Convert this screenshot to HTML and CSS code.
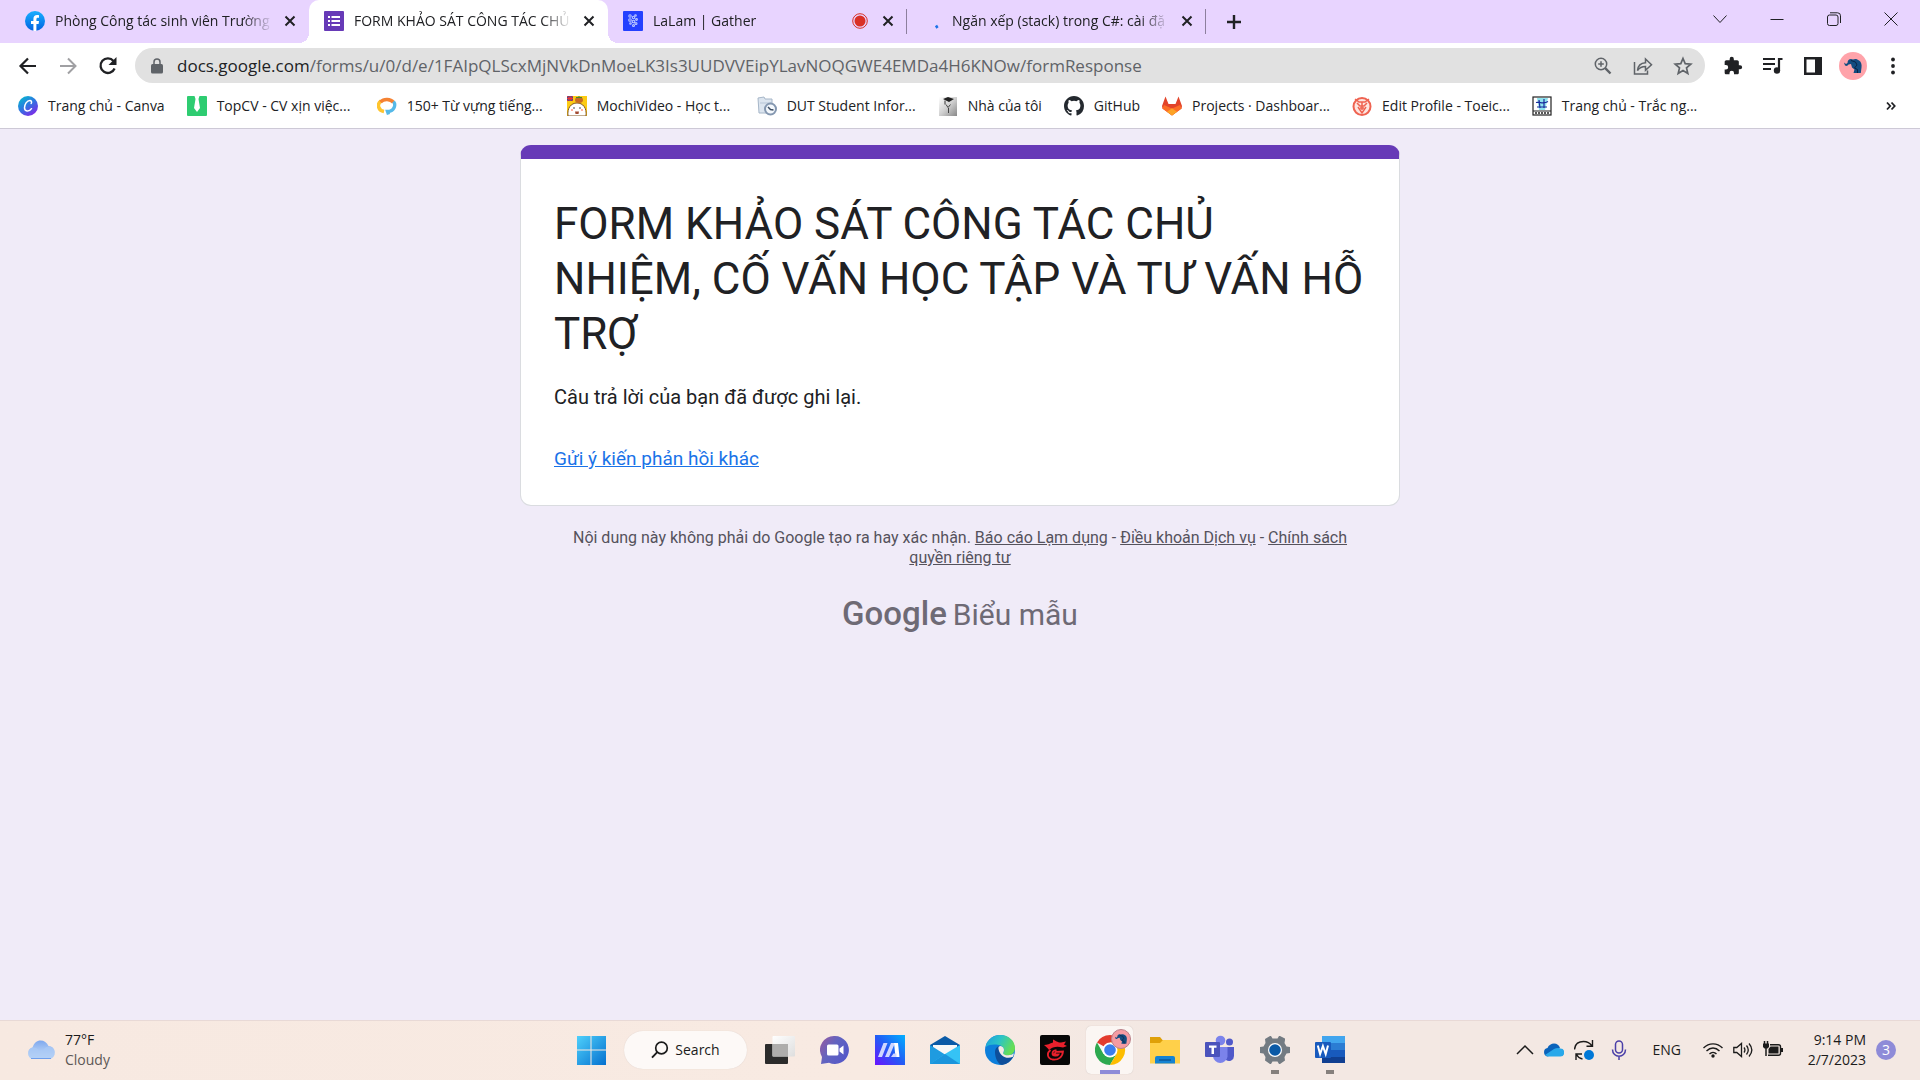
FILE: index.html
```html
<!DOCTYPE html>
<html lang="vi">
<head>
<meta charset="utf-8">
<meta name="viewport" content="width=device-width, initial-scale=1">
<title>FORM KHẢO SÁT CÔNG TÁC CHỦ NHIỆM</title>
<link rel="stylesheet" href="styles.css">
</head>
<body>
<header class="browser">
  <div class="tab-strip">
    <div class="tabs">
      <div class="tab">
        <svg class="icon-20" viewBox="0 0 20 20"><defs><linearGradient id="fb" x1="0" y1="0" x2="0" y2="1"><stop offset="0" stop-color="#19afff"/><stop offset="1" stop-color="#0062e0"/></linearGradient></defs><circle cx="10" cy="10" r="10" fill="url(#fb)"/><path d="M8.4 20v-7H6v-3h2.4V8c0-2.500 1.400-3.900 3.700-3.900.9 0 1.900.2 1.900.2v2.500h-1.100c-1.200 0-1.500.7-1.500 1.500V10h2.600l-.4 3h-2.200v7z" fill="#fff"/></svg>
        <span class="tab-title">Phòng Công tác sinh viên Trường</span>
        <button class="tab-close" aria-label="Close tab"><svg viewBox="0 0 12 12"><path d="M1.500 1.500l9 9M10.500 1.500l-9 9"/></svg></button>
      </div>
      <div class="tab tab-active">
        <svg class="icon-20" viewBox="0 0 20 20"><rect width="20" height="20" rx="1" fill="#673ab7"/><path d="M4 5h2v2H4zM7.500 5H16v2H7.500zM4 9h2v2H4zM7.500 9H16v2H7.500zM4 13h2v2H4zM7.500 13H16v2H7.500z" fill="#fff"/></svg>
        <span class="tab-title">FORM KHẢO SÁT CÔNG TÁC CHỦ</span>
        <button class="tab-close" aria-label="Close tab"><svg viewBox="0 0 12 12"><path d="M1.500 1.500l9 9M10.500 1.500l-9 9"/></svg></button>
      </div>
      <div class="tab tab-divided">
        <svg class="icon-20" viewBox="0 0 20 20"><rect width="20" height="20" rx="1" fill="#2440ff"/><g fill="none" stroke="#b9c6ff" stroke-width="1.100"><circle cx="7" cy="5" r="1.200"/><circle cx="10.500" cy="6.500" r="1.200"/><circle cx="7" cy="9" r="1.300"/><circle cx="12.500" cy="4.500" r=".8"/><circle cx="10.500" cy="10.500" r="1.300"/><circle cx="13.500" cy="8.500" r=".9"/><circle cx="13" cy="12.500" r="1"/><circle cx="10.500" cy="14.500" r="1"/><circle cx="7.500" cy="12.500" r=".8"/></g></svg>
        <span class="tab-title">LaLam | Gather</span>
        <svg class="icon-16 recording" viewBox="0 0 16 16"><circle cx="8" cy="8" r="7.300" fill="none" stroke="#d93025"/><circle cx="8" cy="8" r="5.500" fill="#d93025"/></svg>
        <button class="tab-close" aria-label="Close tab"><svg viewBox="0 0 12 12"><path d="M1.500 1.500l9 9M10.500 1.500l-9 9"/></svg></button>
      </div>
      <div class="tab tab-divided">
        <svg class="icon-20" viewBox="0 0 20 20"><path d="M14 14.500l1.500 2.500" stroke="#1a73e8" stroke-width="2.500"/></svg>
        <span class="tab-title">Ngăn xếp (stack) trong C#: cài đặ</span>
        <button class="tab-close" aria-label="Close tab"><svg viewBox="0 0 12 12"><path d="M1.500 1.500l9 9M10.500 1.500l-9 9"/></svg></button>
      </div>
    </div>
    <button class="new-tab" aria-label="New tab"><svg class="icon-16" viewBox="0 0 16 16"><path d="M8 1v14M1 8h14" stroke="#202124" stroke-width="2.400"/></svg></button>
    <div class="window-controls">
      <button aria-label="Search tabs"><svg class="icon-16" viewBox="0 0 16 16"><path d="M1.500 4.500L8 11.500l6.500-7"/></svg></button>
      <button aria-label="Minimize"><svg class="icon-16" viewBox="0 0 16 16"><path d="M1.500 8.500h13"/></svg></button>
      <button aria-label="Restore"><svg class="icon-16" viewBox="0 0 16 16"><rect x="1.500" y="4" width="10.500" height="10.500" rx="2"/><path d="M4 1.800h7.500a3 3 0 0 1 3 3V12"/></svg></button>
      <button aria-label="Close"><svg class="icon-16" viewBox="0 0 16 16"><path d="M1.500 1.500l13 13M14.500 1.500l-13 13"/></svg></button>
    </div>
  </div>

  <div class="toolbar">
    <div class="nav">
      <button aria-label="Back"><svg class="icon-20" viewBox="0 0 20 20"><path d="M18 10H3M10 2.500L2.500 10l7.500 7.500" fill="none" stroke="#202124" stroke-width="2.200"/></svg></button>
      <button aria-label="Forward"><svg class="icon-20" viewBox="0 0 20 20"><path d="M2 10h15M10 2.500l7.500 7.500-7.500 7.500" fill="none" stroke="#a0a0a3" stroke-width="2"/></svg></button>
      <button aria-label="Reload"><svg class="icon-20" viewBox="0 0 20 20"><path d="M16.600 12.500A7.300 7.300 0 1 1 15.500 5" fill="none" stroke="#202124" stroke-width="2.300"/><path d="M18.500 1v8h-8z" fill="#202124"/></svg></button>
    </div>
    <div class="omnibox">
      <svg class="lock" viewBox="0 0 12 16"><rect x="0" y="6" width="12" height="9.500" rx="1.500" fill="#5f6368"/><path d="M3 6.500V4a3 3 0 0 1 6 0v2.500" fill="none" stroke="#5f6368" stroke-width="1.500"/></svg>
      <label class="url-host" for="url">docs.google.com</label>
      <input class="url-path" id="url" type="text" value="/forms/u/0/d/e/1FAIpQLScxMjNVkDnMoeLK3Is3UUDVVEipYLavNOQGWE4EMDa4H6KNOw/formResponse">
      <div class="omnibox-actions">
        <button aria-label="Zoom"><svg class="icon-20" viewBox="0 0 20 20"><circle cx="8" cy="8" r="5.700"/><path d="M12.200 12.200l5.300 5.300" stroke-width="2.400"/><path d="M8 5.200v5.600M5.200 8h5.600"/></svg></button>
        <button aria-label="Share"><svg class="icon-20" viewBox="0 0 20 20"><path d="M1.500 6v12h13v-3.500M4.500 14.500c.5-5 3.500-7.500 8-7.700V3l6 5.700-6 5.500V10.500c-3.500 0-6 1-8 4z"/></svg></button>
        <button aria-label="Bookmark"><svg class="icon-20" viewBox="0 0 20 20"><path d="M10 2.500l2.200 5.200 5.600.5-4.300 3.700 1.300 5.500-4.800-2.900-4.800 2.900 1.300-5.500-4.300-3.700 5.600-.5z" stroke-width="1.700"/></svg></button>
      </div>
    </div>
    <div class="toolbar-actions">
      <button aria-label="Extensions"><svg class="icon-20" viewBox="0 0 24 24"><path d="M20.500 11H19V7c0-1.100-.9-2-2-2h-4V3.500a2.500 2.500 0 0 0-5 0V5H4c-1.100 0-2 .9-2 2v3.800h1.500a2.700 2.700 0 0 1 0 5.400H2V20c0 1.100.9 2 2 2h3.800v-1.500a2.700 2.700 0 0 1 5.400 0V22H17c1.100 0 2-.9 2-2v-4h1.500a2.500 2.500 0 0 0 0-5z" fill="#202124"/></svg></button>
      <button aria-label="Media"><svg class="icon-20" viewBox="0 0 20 20"><path d="M0 3h12M0 8h12M0 13h8M19.500 3H16v11" fill="none" stroke="#202124" stroke-width="2.200"/><circle cx="14" cy="14.500" r="3.200" fill="#202124"/></svg></button>
      <button aria-label="Side panel"><svg class="icon-20" viewBox="0 0 20 20"><path d="M1 1h18v18H1zM3.500 3.500v13H12v-13z" fill="#202124" fill-rule="evenodd"/></svg></button>
      <button aria-label="Profile"><svg class="icon-28" viewBox="0 0 28 28"><defs><g id="elephant"><path d="M5 10.500l2 1.500 1.500-1C8.500 8.500 10 7 12 7l2 .5c2-1 4.500-.5 6 1 2 1 3 4 2.500 7l-.7 5.500H14.500l1-3.500-2.500-2-1-3.500-2.500.5L8 14l-2-.5z" fill="#124c80"/><path d="M12 8.500l4.500 1.500 1.500 3-2.500 3M15.500 16l3 1.500v3.500" fill="none" stroke="#0a2446"/></g></defs><circle cx="14" cy="14" r="14" fill="#ffa3aa"/><use href="#elephant"/></svg></button>
      <button aria-label="Menu"><svg class="icon-20" viewBox="0 0 20 20"><g fill="#202124"><circle cx="10" cy="3.500" r="1.900"/><circle cx="10" cy="10" r="1.900"/><circle cx="10" cy="16.500" r="1.900"/></g></svg></button>
    </div>
  </div>

  <nav class="bookmarks">
    <a href="#"><svg class="icon-20" viewBox="0 0 20 20"><defs><linearGradient id="cv" x1="0" y1="0" x2=".7" y2="1"><stop offset="0" stop-color="#00c4cc"/><stop offset=".5" stop-color="#2a7be0"/><stop offset="1" stop-color="#7d2ae8"/></linearGradient></defs><circle cx="10" cy="10" r="10" fill="url(#cv)"/><path d="M13.200 7.500c.8-1.500.3-3-1.300-3-3 0-5.400 4-5.400 7.300 0 3.800 4.500 4.600 7 .9" fill="none" stroke="#fff" stroke-width="1.500" stroke-linecap="round"/></svg><span>Trang chủ - Canva</span></a>
    <a href="#" class="bookmark-long"><svg class="icon-20" viewBox="0 0 20 20"><rect width="20" height="20" rx="1" fill="#2ecc71"/><path d="M7.500 0h5l-1 3 1.500 9-3 4-3-4 1.500-9z" fill="#fff"/></svg><span>TopCV - CV xịn việc...</span></a>
    <a href="#" class="bookmark-long"><svg class="icon-20" viewBox="0 0 20 20"><path d="M7 15.500A7 6 0 0 1 4 5" fill="none" stroke="#ffc52e" stroke-width="3.500"/><path d="M3.500 6A8 6.500 0 0 1 16.500 6.500" fill="none" stroke="#f58232" stroke-width="3.500"/><path d="M16.500 5.500c2.500 3 1 8-3 9.500-1.500.6-3 .5-3 .5l1 3" fill="none" stroke="#55b9e8" stroke-width="3.300"/></svg><span>150+ Từ vựng tiếng...</span></a>
    <a href="#" class="bookmark-long"><svg class="icon-20" viewBox="0 0 20 20"><rect width="20" height="20" fill="#fccb14"/><path d="M0 0h6v5H0z" fill="#35509b"/><path d="M0 0l6 5M6 0L0 5M3 0v5M0 2.500h6" stroke="#e33"/><path d="M1 20c-1-8 3-13 9-13s10 5 9 13z" fill="#fff" stroke="#825620"/><ellipse cx="12" cy="4" rx="4" ry="3" fill="#c96a22"/><path d="M12 2V0M9 1.500h6" stroke="#46862f"/><circle cx="7" cy="12" r=".8" fill="#333"/><circle cx="13" cy="12" r=".8" fill="#333"/><path d="M8 15.500h4l-.5 2.500h-3z" fill="#a24b32"/><path d="M4 14h2M14 14h2" stroke="#ffad9e" stroke-width="2"/></svg><span>MochiVideo - Học t...</span></a>
    <a href="#"><svg class="icon-20" viewBox="0 0 20 20"><path d="M1 2l6-1 1 2h7v14H2z" fill="#dce5ef" stroke="#a6b6c8"/><path d="M3 7h12" stroke="#b7c5d6"/><circle cx="13.500" cy="13" r="5.500" fill="#f4f8fc" stroke="#8497b0" stroke-width="2"/><path d="M11 11l2.500 2.500 3 .5" stroke="#3d4e63" fill="none" stroke-width="1.500"/></svg><span>DUT Student Infor...</span></a>
    <a href="#"><svg class="icon-20" viewBox="0 0 20 20"><defs><linearGradient id="nh" x1="0" y1="0" x2="1" y2="1"><stop offset="0" stop-color="#fff"/><stop offset=".5" stop-color="#d0d0d0"/><stop offset="1" stop-color="#888"/></linearGradient></defs><path d="M1 1h18v19H1z" fill="url(#nh)"/><path d="M5 3l5-2 6 2-5 3z" fill="#222"/><path d="M7 4.500v4" stroke="#333"/><path d="M8 8.500l2 3 2.500-3M10.500 12v5" stroke="#444" fill="none"/></svg><span>Nhà của tôi</span></a>
    <a href="#"><svg class="icon-20" viewBox="0 0 16 16"><path d="M8 0C3.580 0 0 3.580 0 8c0 3.540 2.290 6.530 5.470 7.590.4.070.55-.17.55-.38 0-.19-.01-.82-.01-1.490-2.010.37-2.530-.49-2.690-.94-.09-.23-.48-.94-.82-1.130-.28-.15-.68-.52-.01-.53.63-.01 1.080.58 1.230.82.72 1.210 1.870.87 2.330.66.07-.52.28-.87.51-1.070-1.780-.2-3.640-.89-3.640-3.950 0-.87.31-1.590.82-2.150-.08-.2-.36-1.020.08-2.120 0 0 .67-.21 2.200.82a7.600 7.600 0 0 1 4 0c1.530-1.040 2.200-.82 2.200-.82.44 1.100.16 1.920.08 2.120.51.56.82 1.270.82 2.150 0 3.070-1.870 3.750-3.650 3.950.29.25.54.73.54 1.480 0 1.070-.01 1.930-.01 2.200 0 .21.15.46.55.38A8 8 0 0 0 16 8c0-4.420-3.580-8-8-8z" fill="#24292f"/></svg><span>GitHub</span></a>
    <a href="#" class="bookmark-long"><svg class="icon-20" viewBox="0 0 20 20"><path d="M10 19.500L.5 12.500 0 10 3.500.5 6.500 8h7l3-7.500L20 10l-.5 2.500z" fill="#e24329"/><path d="M10 19.500L.3 12.500 2 9l8 3.500L18 9l1.700 3.500z" fill="#fc6d26"/><path d="M10 19.500l-5-3.700 5-3.600 5 3.600z" fill="#fca326"/></svg><span>Projects · Dashboar...</span></a>
    <a href="#"><svg class="icon-20" viewBox="0 0 20 20"><circle cx="10" cy="10.500" r="8.500" fill="#fde5e0" stroke="#ef6351" stroke-width="2"/><path d="M3 3l4 3h6l4-3M5 7l3 3h4l3-3M6 11l4 6 4-6M8 12h4M10 6v8" fill="none" stroke="#ef6351" stroke-width="1.500"/></svg><span>Edit Profile - Toeic...</span></a>
    <a href="#" class="bookmark-long"><svg class="icon-20" viewBox="0 0 20 20"><rect x="1" y="1" width="18" height="18" fill="#fff" stroke="#222" stroke-width="1.200"/><path d="M5 2h11l-3 12H7z" fill="#8fe3ee"/><path d="M4 6.500c4-1 7 2 12-1M5 11h10M7 4l1 8M12 3v9" fill="none" stroke="#1b2a9c" stroke-width="1.200"/><path d="M1 15h18" stroke="#222"/><path d="M3 17h14" stroke="#222" stroke-width="1.500" stroke-dasharray="2 1"/></svg><span>Trang chủ - Trắc ng...</span></a>
    <button class="bookmarks-more" aria-label="More bookmarks"><svg class="icon-10" viewBox="0 0 10 10"><path d="M1 1.500L4.200 5 1 8.500M5.500 1.500L8.700 5 5.500 8.500" fill="none" stroke="#202124" stroke-width="1.800"/></svg></button>
  </nav>
</header>

<main class="page">
  <section class="card">
    <h1>FORM KHẢO SÁT CÔNG TÁC CHỦ NHIỆM, CỐ VẤN HỌC TẬP VÀ TƯ VẤN HỖ TRỢ</h1>
    <p>Câu trả lời của bạn đã được ghi lại.</p>
    <a href="#">Gửi ý kiến phản hồi khác</a>
  </section>
  <p class="legal">Nội dung này không phải do Google tạo ra hay xác nhận. <a href="#">Báo cáo Lạm dụng</a> - <a href="#">Điều khoản Dịch vụ</a> - <a href="#">Chính sách quyền riêng tư</a></p>
  <a class="brand" href="#"><span class="brand-name">Google</span><span class="brand-product">Biểu mẫu</span></a>
</main>

<footer class="taskbar">
  <button class="weather">
    <svg class="cloud" viewBox="0 0 30 20"><defs><linearGradient id="cl" x1="0" y1="0" x2="0" y2="1"><stop offset="0" stop-color="#7ea8ee"/><stop offset="1" stop-color="#cfe4fa"/></linearGradient></defs><path d="M6.500 19a6 6 0 0 1 0-11.500C8 3 11 .5 14.500.5S21 2.500 22.500 6a6.600 6.600 0 0 1 1 13z" fill="url(#cl)"/><path d="M17 11c1-4 6-6 9.500-3.500A6.600 6.600 0 0 1 23.500 19h-17A6 6 0 0 1 6 7.600c4-.6 7 1.500 7.500 4" fill="#a9c9f5" opacity=".7"/><path d="M5 18.500h20" stroke="#6f9fec"/></svg>
    <span class="weather-text"><span>77°F</span><span class="weather-sky">Cloudy</span></span>
  </button>

  <div class="apps">
    <button class="app" aria-label="Start"><svg class="icon-30" viewBox="0 0 30 30"><defs><linearGradient id="wn" x1="0" y1="0" x2="1" y2="1"><stop offset="0" stop-color="#4fd0fb"/><stop offset="1" stop-color="#0470cf"/></linearGradient></defs><path d="M1 1h13.500v13.500H1zM15.500 1H30v13.500H15.500zM1 15.500h13.500V30H1zM15.500 15.500H30V30H15.500z" fill="url(#wn)"/></svg></button>
    <button class="search"><svg class="icon-18" viewBox="0 0 18 18"><circle cx="10.500" cy="7" r="5.800" fill="none" stroke="#1b1b1b" stroke-width="1.700"/><path d="M6.300 11.200L1 16.700" stroke="#1b1b1b" stroke-width="1.900"/></svg><span>Search</span></button>
    <button class="app" aria-label="Task view"><svg class="icon-30" viewBox="0 0 30 30"><defs><linearGradient id="tv" x1="0" y1="0" x2="1" y2="1"><stop offset="0" stop-color="#fff"/><stop offset="1" stop-color="#dedede"/></linearGradient></defs><rect x="0" y="9" width="23" height="20" rx="1" fill="#2b2b2b"/><rect x="7.500" y="1" width="22.500" height="20.500" rx="1" fill="url(#tv)"/><rect x="7.500" y="9" width="15.500" height="12.500" fill="#aeadac"/></svg></button>
    <button class="app" aria-label="Chat"><svg class="icon-30" viewBox="0 0 30 30"><defs><linearGradient id="ch" x1="0" y1="0" x2="1" y2=".6"><stop offset="0" stop-color="#9b5a9f"/><stop offset=".5" stop-color="#6264c0"/><stop offset="1" stop-color="#5558c8"/></linearGradient></defs><path d="M15 1a14 14 0 1 1-6 26.700L1 29l1-7A14 14 0 0 1 15 1z" fill="url(#ch)"/><rect x="7" y="9.500" width="11.500" height="11" rx="1.500" fill="#fff"/><path d="M19.500 13.500l4-3v9l-4-3z" fill="#fff"/></svg></button>
    <button class="app" aria-label="MyASUS"><svg class="icon-30" viewBox="0 0 30 30"><defs><linearGradient id="ma" x1="0" y1="1" x2="1" y2="0"><stop offset="0" stop-color="#6a12ff"/><stop offset=".5" stop-color="#225cf5"/><stop offset="1" stop-color="#00b0ff"/></linearGradient></defs><rect width="30" height="30" fill="url(#ma)"/><path d="M3 22L8.500 8h4L7 22zM10 22l6-14h4l-6 14z" fill="#cfd6ff"/><path d="M19 8h4l1.500 14h-4z" fill="#fff"/><path d="M16 22l2.500-3.500h3V22z" fill="#cfd6ff"/></svg></button>
    <button class="app" aria-label="Mail"><svg class="icon-30" viewBox="0 0 30 30"><path d="M0 10L15 1l15 9v6H0z" fill="#0b5ba7"/><path d="M3 10h24v12H3z" fill="#f7f7f7"/><path d="M0 10l15 9.500V29H0z" fill="#1f9be0"/><path d="M30 10L15 19 0 29h30z" fill="#35c3f5"/><path d="M15 19l15 10H0z" fill="#1b95dc"/></svg></button>
    <button class="app" aria-label="Edge"><svg class="icon-30" viewBox="0 0 30 30"><defs><linearGradient id="e1" x1="0" y1="0" x2="1" y2=".4"><stop offset="0" stop-color="#1b9de0"/><stop offset=".5" stop-color="#2cc4c6"/><stop offset="1" stop-color="#65de55"/></linearGradient></defs><circle cx="15" cy="15" r="15" fill="#0d7fdb"/><path d="M1 10C3 4 9 0 15 0c9 0 15 6 15 13 0 5-4 7.500-7.500 7.500-4 0-5-1.500-4-3 1.500-2.500.5-6.500-4.500-7.500-5-1-10-.5-13 2z" fill="url(#e1)"/><path d="M10 17c0-4 3-6 5-6-2 3-1 7 2 9 3 2.500 7 2.500 11 1l.5 0A15 15 0 0 1 17 30c-4-1-7-7-7-13z" fill="#0e4f9b"/><path d="M13.500 14c-.5-2 .5-3 2-3 2.500.5 4.500 3 3 6-1 1.800.2 3 4 3.300 2.500.2 5-.8 6.500-2l-1 3.500c-6 2.800-13 0-14.500-7.800z" fill="#f4eae5"/></svg></button>
    <button class="app" aria-label="Garena"><svg class="icon-30" viewBox="0 0 30 30"><rect width="30" height="30" rx="2" fill="#070707"/><path d="M4 10c3 0 6-1.500 9-2.500L13 4.500c3 1 4 3 8 3l5-1-2 3 3 1.500-4 1.500c-6-1.500-10-1-14 2.500-1-2-3-3-5-5z" fill="#e8202c"/><path d="M10.500 15c-4 3-3.500 8 2 9.500 6 .8 10-2.500 10.500-8l-7 .3-2 2.500h4.500c-1 2-6 2-6-.8 0-1.500 1.500-3 4-3.300" fill="none" stroke="#e8202c" stroke-width="1.800"/></svg></button>
    <button class="app app-active" aria-label="Chrome"><svg class="icon-36" viewBox="0 0 36 36"><path d="M15 21L2 13.500A15 15 0 0 1 28 13.500H15z" fill="#e33b2e"/><path d="M15 21l6.500 4L15 36A15 15 0 0 1 2 13.500L8.500 25z" fill="#2da94f"/><path d="M15 13.500h13A15 15 0 0 1 15 36l6.500-11z" fill="#fdbd00"/><circle cx="15" cy="21" r="7.500" fill="#fff"/><circle cx="15" cy="21" r="5.800" fill="#3b7ded"/><circle cx="26" cy="10" r="9.500" fill="#f59ba2" stroke="#b98189"/><use href="#elephant" transform="translate(16.500 .5) scale(.68)"/></svg></button>
    <button class="app" aria-label="File Explorer"><svg class="icon-30" viewBox="0 0 30 30"><path d="M0 2h10l2.500 3H30v10H0z" fill="#dfa008"/><path d="M0 8h10l3-3h17v23.500H0z" fill="#ffd04a"/><path d="M5 28.500V23a2 2 0 0 1 2-2h16a2 2 0 0 1 2 2v5.500z" fill="#1583d2"/><path d="M9 25h12" stroke="#0c5799" stroke-width="1.500"/></svg></button>
    <button class="app" aria-label="Teams"><svg class="icon-30" viewBox="0 0 30 30"><circle cx="24.500" cy="7" r="3.500" fill="#5059c9"/><circle cx="15.500" cy="5.500" r="4.800" fill="#7b83eb"/><path d="M21 12h8v9a5 5 0 0 1-8 4z" fill="#5059c9"/><path d="M8 12h14.500v9.500a7.300 7.300 0 0 1-14.500 0z" fill="#7b83eb"/><rect y="7" width="15" height="15" rx="1" fill="#4b53bc"/><path d="M4 10.500h7.500v2.200H9V19H6.500v-6.300H4z" fill="#fff"/></svg></button>
    <button class="app app-open" aria-label="Settings"><svg class="icon-30" viewBox="0 0 30 30"><path d="M10 1h1l1.500 2.500h5L19 1h1l5 2.500v1.500L24.500 8l2 3.500 3.500.5v6l-3.500.5-2 3.500.5 3.500L20 29h-1l-1.500-2.500h-5L11 29h-1l-5-3.500.5-3.500-2-3.500L0 18v-6l3.500-.5 2-3.500L5 4z" fill="#737b82"/><circle cx="15" cy="15" r="7" fill="#fff"/><circle cx="15" cy="15" r="5.800" fill="#0a5aa6"/></svg></button>
    <button class="app app-open" aria-label="Word"><svg class="icon-30" viewBox="0 0 30 30"><path d="M7 1h23v7H7z" fill="#41a5ee"/><path d="M7 8h23v7H7z" fill="#2b7cd3"/><path d="M7 15h23v7H7z" fill="#185abd"/><path d="M7 22h23v6H7z" fill="#103f91"/><rect y="7" width="16" height="16" rx="1" fill="#185abd"/><path d="M2.800 10.500l2.300 8.500 2.800-8 2.800 8L13 10.500" fill="none" stroke="#fff" stroke-width="2"/></svg></button>
  </div>

  <div class="tray">
    <button aria-label="Hidden icons"><svg class="icon-18" viewBox="0 0 18 18"><path d="M1 13l8-8 8 8" fill="none" stroke="#1b1b1b" stroke-width="1.500"/></svg></button>
    <button aria-label="OneDrive"><svg class="icon-20" viewBox="0 0 20 20"><path d="M4 16.500A4.300 4.300 0 0 1 3.500 8C4.500 5 7.500 3.500 10 3.500c3 0 5 1.700 6 4.500l-6 4z" fill="#0a63bb"/><path d="M4 16.500L1 15l9-6c2-1.200 5-1.500 6.500-.5A4 4 0 0 1 16 16.500z" fill="#28a8ea"/></svg></button>
    <button aria-label="Updates"><svg class="icon-20" viewBox="0 0 20 20"><path d="M.5 9.500C1 4 5 1.500 9.500 1.500c3.500 0 6.500 1.500 8.500 4.500M18.500 0v6.200h-6M2 20v-6h6M2.500 14.500c1.500 3 3.500 4 6 4.500" fill="none" stroke="#1b1b1b" stroke-width="1.400"/><circle cx="15" cy="15" r="5" fill="#0078d7"/></svg></button>
    <button class="tray-mic" aria-label="Microphone"><svg class="icon-20" viewBox="0 0 20 20"><rect x="6.500" y="1" width="7" height="12" rx="3.500" fill="none" stroke="#4a3fa8" stroke-width="1.500"/><path d="M3.500 9.500c0 9 13 9 13 0M10 16v4" fill="none" stroke="#4a3fa8" stroke-width="1.500"/></svg></button>
    <button class="tray-lang">ENG</button>
    <button class="tray-status" aria-label="Network, volume and battery">
      <svg class="icon-20" viewBox="0 0 20 20"><path d="M.5 8c5.500-5.500 13.500-5.500 19 0M3.500 11c4-4 9-4 13 0M6.500 14c2-2 5-2 7 0" fill="none" stroke="#1b1b1b" stroke-width="1.400"/><circle cx="10" cy="16" r="1.700" fill="#1b1b1b"/></svg>
      <svg class="icon-20" viewBox="0 0 20 20"><path d="M.8 7.500h3L8.500 3.500v13l-4.700-4h-3zM11 7.500c1.200 1.600 1.200 3.400 0 5M13.500 5.500c2.200 2.800 2.200 6.200 0 9M16 3.500c3.500 4 3.500 9 0 13" fill="none" stroke="#1b1b1b" stroke-width="1.300"/></svg>
      <svg class="icon-20" viewBox="0 0 20 20"><path d="M1.500 1v3M4.500 1v3M3 8v8" stroke="#1b1b1b" stroke-width="1.500"/><path d="M0 3.500h6V7L4.500 8.500h-3L0 7z" fill="#1b1b1b"/><path d="M7 4.800h8.500a2 2 0 0 1 2 2v6.400a2 2 0 0 1-2 2H5" fill="none" stroke="#1b1b1b" stroke-width="1.400"/><path d="M7.500 6.500h8v7h-10V9zM18 8h2v4h-2z" fill="#1b1b1b"/></svg>
    </button>
    <button class="clock"><span>9:14 PM</span><span>2/7/2023</span></button>
    <button class="badge">3</button>
  </div>
</footer>
</body>
</html>
```
FILE: styles.css
```css
* {
  box-sizing: border-box;
}

body {
  margin: 0;
  min-height: 100vh;
  display: flex;
  flex-direction: column;
  background: #f0ebf8;
  color: #202124;
  font-family: "Open Sans", "Noto Sans", sans-serif;
  font-size: 14px;
  line-height: 20px;
}

button {
  display: flex;
  align-items: center;
  justify-content: center;
  padding: 0;
  border: 0;
  background: none;
  color: inherit;
  font: inherit;
}

svg {
  display: block;
  flex: none;
}

.icon-10 { width: 10px; height: 10px; }
.icon-16 { width: 16px; height: 16px; }
.icon-18 { width: 18px; height: 18px; }
.icon-20 { width: 20px; height: 20px; }
.icon-28 { width: 28px; height: 28px; }
.icon-30 { width: 30px; height: 30px; }
.icon-36 { width: 36px; height: 36px; }

/* Browser chrome */
.browser {
  background: #fff;
  border-bottom: 1px solid #cdc9d6;
}

.tab-strip {
  display: flex;
  align-items: stretch;
  height: 43px;
  padding: 0 1px 0 10px;
  background: #e8d4ff;
}

.tabs {
  display: flex;
  flex: 0 1 1196px;
  min-width: 0;
}

.tab {
  display: flex;
  flex: 1;
  align-items: center;
  gap: 10px;
  min-width: 0;
  padding: 0 12px 2px 15px;
}

.tab-title {
  flex: 1;
  overflow: hidden;
  white-space: nowrap;
  -webkit-mask-image: linear-gradient(to left, transparent, #000 30px);
  mask-image: linear-gradient(to left, transparent, #000 30px);
}

.tab-close {
  width: 14px;
  height: 20px;
}

.tab-close svg {
  width: 12px;
  height: 12px;
  fill: none;
  stroke: #202124;
  stroke-width: 2;
}

.recording {
  margin-right: 3px;
}

.tab-active {
  position: relative;
  border-radius: 10px 10px 0 0;
  background: #fff;
}

/* Flared feet that join the active tab to the toolbar */
.tab-active::before,
.tab-active::after {
  content: "";
  position: absolute;
  bottom: 0;
  width: 10px;
  height: 10px;
}

.tab-active::before {
  right: 100%;
  background: radial-gradient(circle at 0 0, transparent 10px, #fff 10px);
}

.tab-active::after {
  left: 100%;
  background: radial-gradient(circle at 100% 0, transparent 10px, #fff 10px);
}

.tab-divided {
  background: linear-gradient(#8d7f9d, #8d7f9d) right 9px / 1px 25px no-repeat;
}

.new-tab {
  width: 56px;
}

.window-controls {
  display: flex;
  margin-left: auto;
}

.window-controls button {
  width: 57px;
  padding-bottom: 5px;
}

.window-controls svg {
  fill: none;
  stroke: #202124;
  stroke-width: 1;
}

.toolbar {
  display: flex;
  align-items: center;
  height: 45px;
  padding: 0 7px 0 8px;
}

.nav,
.toolbar-actions {
  display: flex;
}

.nav button,
.toolbar-actions button {
  width: 40px;
  height: 40px;
}

.omnibox {
  display: flex;
  flex: 1;
  align-items: center;
  height: 35px;
  margin: 0 8px 0 7px;
  padding: 0 12px 0 16px;
  border-radius: 18px;
  background: #e1e1e1;
  font-size: 17px;
}

.lock {
  width: 12px;
  height: 16px;
  margin-right: 14px;
}

.url-path {
  flex: 1;
  min-width: 0;
  padding: 0;
  border: 0;
  outline: 0;
  background: none;
  color: #5f6368;
  font: inherit;
}

.omnibox-actions {
  display: flex;
  gap: 20px;
}

.omnibox-actions svg {
  fill: none;
  stroke: #5f6368;
  stroke-width: 1.5;
}

.bookmarks {
  display: flex;
  align-items: center;
  gap: 22px;
  height: 40px;
  padding: 0 24px 4px 18px;
}

.bookmarks a {
  display: flex;
  gap: 10px;
  color: inherit;
  text-decoration: none;
  white-space: nowrap;
}

.bookmarks .bookmark-long {
  min-width: 168px;
}

.bookmarks-more {
  margin-left: auto;
}

/* Form confirmation */
.page {
  display: flex;
  flex: 1;
  flex-direction: column;
  align-items: center;
  padding: 16px 20px;
  font-family: Roboto, "Noto Sans", sans-serif;
}

.card {
  width: 100%;
  max-width: 880px;
  padding: 38px 33px 32px;
  border: 1px solid #dadce0;
  border-top: 14px solid #673ab7;
  border-radius: 11px;
  background: #fff;
}

.card h1 {
  margin: 0;
  font-size: 44px;
  font-weight: 400;
  line-height: 55px;
}

.card p {
  margin: 21px 0 34px;
  font-size: 20px;
  line-height: 28px;
}

.card a {
  display: block;
  color: #1a73e8;
  font-size: 19px;
  line-height: 28px;
}

.legal {
  max-width: 814px;
  margin: 22px 0;
  color: #55525c;
  font-size: 16px;
  text-align: center;
}

.legal a {
  color: inherit;
}

.brand {
  display: flex;
  align-items: baseline;
  gap: 6px;
  color: #6e6a75;
  line-height: 48px;
  text-decoration: none;
}

.brand-name {
  font-size: 33px;
  font-weight: 500;
}

.brand-product {
  font-size: 30px;
}

/* Taskbar */
.taskbar {
  display: grid;
  grid-template-columns: 1fr auto 1fr;
  align-items: center;
  height: 60px;
  padding: 0 24px 1px 26px;
  border-top: 1px solid #e8d9d6;
  background: linear-gradient(90deg, #f7e9e1, #f8eae2 45%, #f3e8e3 60%, #f3e8e3);
  color: #1b1b1b;
}

.weather {
  gap: 9px;
  justify-self: start;
}

.cloud {
  width: 30px;
  height: 20px;
}

.weather-text,
.clock {
  display: flex;
  flex-direction: column;
}

.weather-text {
  align-items: flex-start;
}

.weather-sky {
  color: #5d5856;
}

.apps {
  display: flex;
  align-items: center;
  padding-right: 2px;
}

.app {
  width: 55px;
  height: 48px;
}

.app-active,
.app-open {
  background: linear-gradient(#85807d, #85807d) center bottom / 8px 4px no-repeat;
}

.app-active {
  width: 47px;
  margin: 0 4px;
  padding: 0 0 6px 6px;
  border-radius: 5px;
  background: linear-gradient(#8e8bd8, #8e8bd8) center bottom / 20px 4px no-repeat, #fbf6f3;
  box-shadow: 0 0 1px #c5b9b4;
}

.search {
  gap: 6px;
  width: 123px;
  height: 38px;
  margin: 0 5px 0 6px;
  border-radius: 19px;
  background: #fdf9f7;
  box-shadow: 0 0 1px #d8c9c2;
}

.tray {
  display: flex;
  align-items: center;
  gap: 10px;
  justify-self: end;
}

.tray-mic {
  margin: 0 5px;
}

.tray-lang {
  margin: 0 12px 0 9px;
}

.tray-status {
  gap: 10px;
}

.clock {
  align-items: flex-end;
  width: 73px;
}

.badge {
  width: 20px;
  height: 20px;
  border-radius: 50%;
  background: #8e8bd8;
  color: #fff;
  font-size: 14px;
}
```
